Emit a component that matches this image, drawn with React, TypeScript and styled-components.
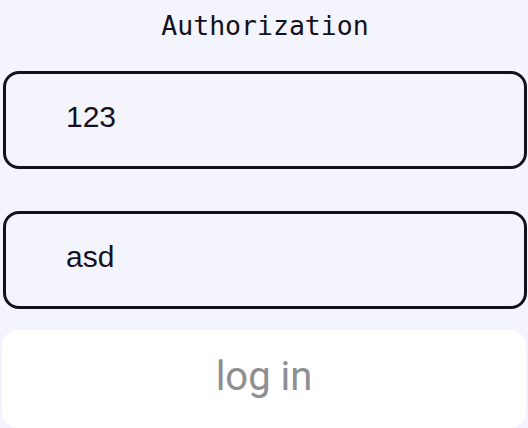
import * as React from "react";
import { FC, useState } from "react";
import styled, { createGlobalStyle } from "styled-components";

const bg = "#f4f4fd";
const ink = "#13111d";

const GlobalStyle = createGlobalStyle`
  html, body {
    margin: 0;
    padding: 0;
    background: ${bg};
  }
`;

const Page = styled.div`
  display: flex;
  flex-direction: column;
  padding: 0 1px 0 3px;
  height: 428px;
  overflow: hidden;
`;

const Title = styled.h1`
  margin: 0;
  height: 71px;
  line-height: 52px;
  text-align: center;
  font-family: "DejaVu Sans Mono", monospace;
  font-weight: 400;
  font-size: 26.5px;
  color: ${ink};
`;

const Field = styled.input<{ $gap: number }>`
  box-sizing: border-box;
  width: 100%;
  height: 98px;
  margin: 0 0 ${(p) => p.$gap}px 0;
  padding: 0 0 6px 60px;
  border: 3px solid ${ink};
  border-radius: 16px;
  background: ${bg};
  color: ${ink};
  font-family: "Liberation Sans", Arial, sans-serif;
  font-size: 30px;
  outline: none;
`;

const LoginButton = styled.button`
  box-sizing: border-box;
  width: 100%;
  height: 98px;
  margin-left: -1px;
  border: none;
  border-radius: 16px;
  background: #ffffff;
  color: #8e8e93;
  font-family: Roboto, "Liberation Sans", sans-serif;
  font-size: 40px;
  padding: 0 0 6px 0;
`;

const App: FC = () => {
  const [login, setLogin] = useState("123");
  const [password, setPassword] = useState("asd");
  return (
    <>
      <GlobalStyle />
      <Page>
        <Title>Authorization</Title>
        <Field $gap={42} value={login} onChange={(e) => setLogin(e.target.value)} />
        <Field $gap={21} value={password} onChange={(e) => setPassword(e.target.value)} />
        <LoginButton>log in</LoginButton>
      </Page>
    </>
  );
};

export default App;
